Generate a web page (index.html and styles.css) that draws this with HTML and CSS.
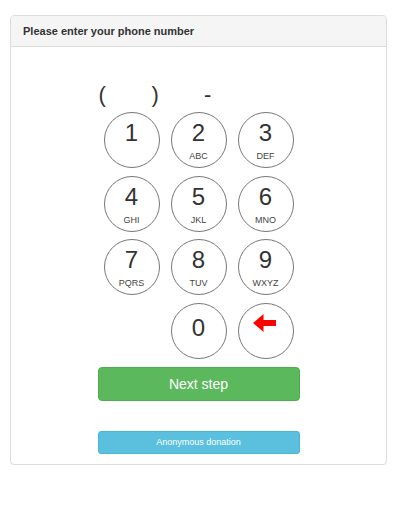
FILE: index.html
```html
<!DOCTYPE html>
<html>
<head>
<meta charset="utf-8">
<link rel="stylesheet" href="styles.css">
</head>
<body>
<div class="panel">
  <div class="panel-heading">Please enter your phone number</div>
  <div class="panel-body">
    <div class="display">
      <span class="seg seg-open">(</span><span class="seg seg-close">)</span><span class="seg">-</span>
    </div>
    <div class="keypad">
      <div class="key"><span class="digit">1</span></div>
      <div class="key"><span class="digit">2</span><span class="letters">ABC</span></div>
      <div class="key"><span class="digit">3</span><span class="letters">DEF</span></div>
      <div class="key"><span class="digit">4</span><span class="letters">GHI</span></div>
      <div class="key"><span class="digit">5</span><span class="letters">JKL</span></div>
      <div class="key"><span class="digit">6</span><span class="letters">MNO</span></div>
      <div class="key"><span class="digit">7</span><span class="letters">PQRS</span></div>
      <div class="key"><span class="digit">8</span><span class="letters">TUV</span></div>
      <div class="key"><span class="digit">9</span><span class="letters">WXYZ</span></div>
      <div class="key-empty"></div>
      <div class="key key-zero"><span class="digit">0</span></div>
      <div class="key key-back">
        <svg width="23" height="18" viewBox="0 0 23 18"><path d="M0 9 L10.5 0 L10.5 6 L23 6 L23 12 L10.5 12 L10.5 18 Z" fill="#ff0000"/></svg>
      </div>
    </div>
    <div class="btn btn-next">Next step</div>
    <div class="btn btn-anon">Anonymous donation</div>
  </div>
</div>
</body>
</html>
```

FILE: styles.css
```css
html, body {
  margin: 0;
  padding: 0;
  background: #fff;
}
body {
  font-family: "Liberation Sans", Arial, Helvetica, sans-serif;
  color: #333;
}
.panel {
  box-sizing: border-box;
  width: 377px;
  margin: 15px 0 0 10px;
  border: 1px solid #dddddd;
  border-radius: 4px;
  box-shadow: 0 1px 1px rgba(0,0,0,0.04);
  background: #fff;
}
.panel-heading {
  background: #f5f5f5;
  border-bottom: 1px solid #dddddd;
  border-radius: 3px 3px 0 0;
  padding: 9px 12px;
  font-size: 11px;
  line-height: 12px;
  font-weight: bold;
  color: #333;
}
.panel-body {
  padding: 36px 0 10px;
}
.display {
  width: 200px;
  margin: 0 auto;
  display: flex;
  font-size: 22px;
  line-height: 24px;
  color: #333;
}
.seg-open { width: 53px; }
.seg-close { width: 52.5px; }
.keypad {
  width: 190px;
  margin: 5px auto 0;
  display: grid;
  grid-template-columns: repeat(3, 56px);
  column-gap: 11px;
  row-gap: 7.5px;
}
.key {
  box-sizing: border-box;
  width: 56px;
  height: 56px;
  border: 1px solid #777;
  border-radius: 50%;
  display: flex;
  flex-direction: column;
  align-items: center;
  padding-top: 8px;
}
.digit {
  font-size: 24px;
  line-height: 24px;
  color: #333;
}
.letters {
  margin-top: 6px;
  font-size: 9px;
  line-height: 10px;
  color: #444;
}
.key-zero {
  padding-top: 12.5px;
}
.key-back {
  padding-top: 10px;
  padding-right: 2px;
}
.key-back svg {
  display: block;
}
.btn {
  box-sizing: border-box;
  width: 202px;
  margin: 0 auto;
  color: #fff;
  text-align: center;
}
.btn-next {
  margin-top: 8.5px;
  height: 34px;
  line-height: 32px;
  font-size: 14px;
  background: #5cb85c;
  border: 1px solid #4cae4c;
  border-radius: 4px;
}
.btn-anon {
  margin-top: 30px;
  height: 23px;
  line-height: 21px;
  font-size: 9px;
  background: #5bc0de;
  border: 1px solid #46b8da;
  border-radius: 3px;
}
```
